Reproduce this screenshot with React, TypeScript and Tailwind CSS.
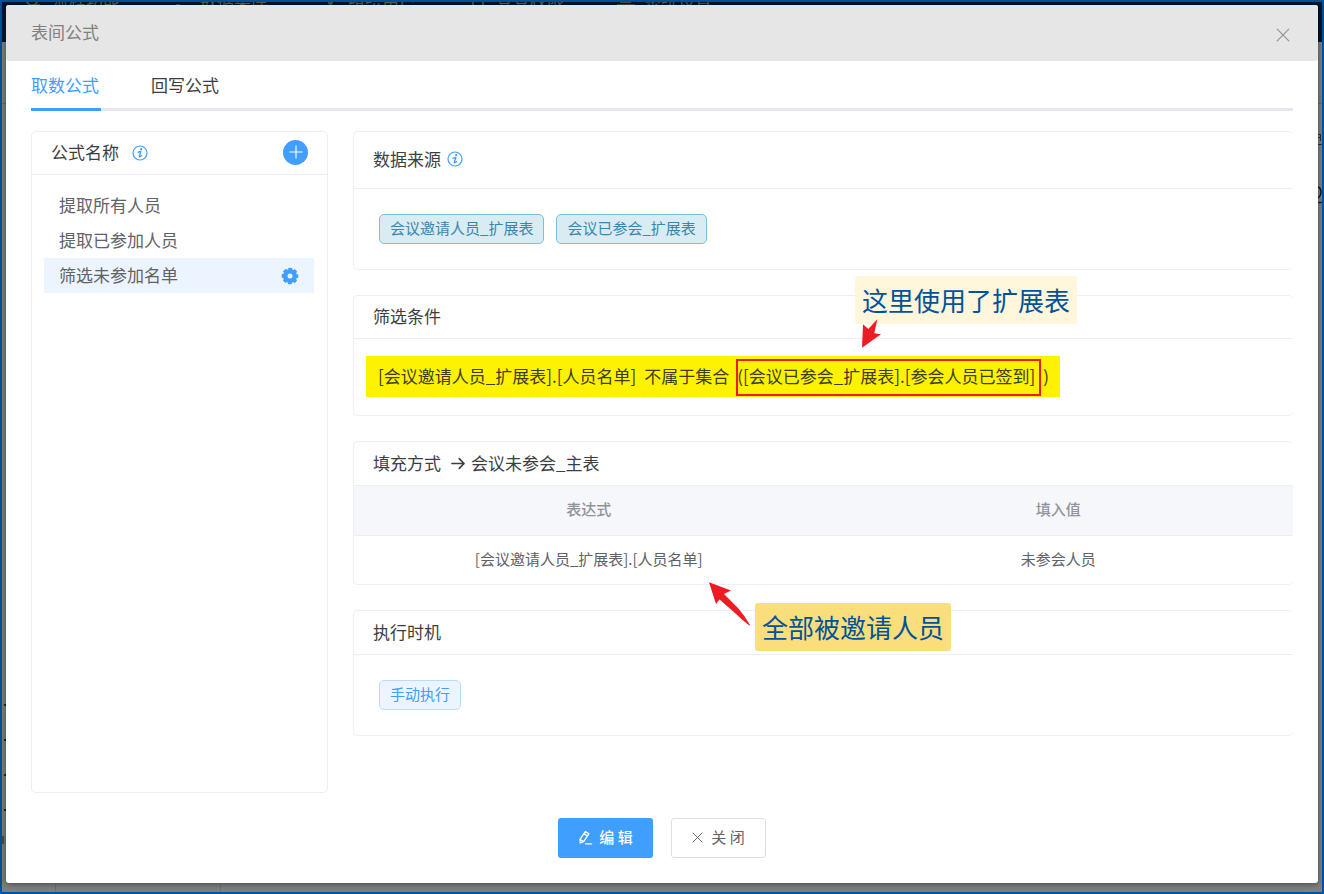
import { useState } from "react";
import type { ReactNode } from "react";

const FORMULAS = ["提取所有人员", "提取已参加人员", "筛选未参加名单"];
const TABS = ["取数公式", "回写公式"];
const SOURCES = ["会议邀请人员_扩展表", "会议已参会_扩展表"];
const NAV = [
  { label: "流程功能", icon: "M2 8A6 6 0 1 0 14 8M5 14H16" },
  { label: "数据集库", icon: "M4 9Q9 4 13 10M4 14H8" },
  { label: "组织用户", icon: "M8 12H13M9 14H12" },
  { label: "登登权限", icon: "M5 4V16M15 4V16" },
  { label: "系统设置", icon: "M4 11H15M1 14H19" },
];

function InfoIcon() {
  return (
    <svg viewBox="0 0 16 16" className="size-4 shrink-0 text-[#409eff]" fill="none" stroke="currentColor" aria-hidden="true">
      <circle cx="8" cy="8" r="7" strokeWidth="1.2" />
      <circle cx="9.2" cy="4.2" r="1.1" fill="currentColor" stroke="none" />
      <path d="M6.2 7.2 8.8 6.4 7.3 11.4Q7.1 12.6 9.4 10.8" strokeWidth="1.4" strokeLinecap="round" strokeLinejoin="round" />
    </svg>
  );
}

function CrossIcon({ className }: { className: string }) {
  return (
    <svg viewBox="0 0 14 14" className={className} fill="none" stroke="currentColor" strokeWidth="1.2" strokeLinecap="round" aria-hidden="true">
      <path d="M1.2 1.2 12.8 12.8M12.8 1.2 1.2 12.8" />
    </svg>
  );
}

function GearIcon() {
  return (
    <svg viewBox="0 0 18 18" className="size-[18px]" fill="none" stroke="#409eff" aria-hidden="true">
      <circle cx="9" cy="9" r="4.8" strokeWidth="4.6" />
      <circle cx="9" cy="9" r="7.1" strokeWidth="2.4" strokeDasharray="3.6 1.976" strokeDashoffset="1.8" />
    </svg>
  );
}

function PencilIcon() {
  return (
    <svg viewBox="0 0 15 15" className="size-[15px]" fill="none" stroke="currentColor" strokeWidth="1.3" strokeLinejoin="round" strokeLinecap="round" aria-hidden="true">
      <path d="M7.3 1.6 10.9 3.7 5.7 11.6 2.2 13 2 9.4ZM6 3.8 9.5 6M2.2 9.5 5.6 11.5M7.5 13.8H13.6" />
    </svg>
  );
}

function Card({ title, head, children }: { title: ReactNode; head: string; children: ReactNode }) {
  return (
    <section className="relative rounded-[5px] border border-r-0 border-[#ebeef5]">
      <h2 className={`flex items-center border-b border-[#ebeef5] px-[19px] pb-0.5 text-[17px] text-[#3c3e42] ${head}`}>{title}</h2>
      {children}
    </section>
  );
}

function Backdrop() {
  return (
    <div className="absolute inset-0 overflow-hidden bg-[#7f7f7f]" aria-hidden="true">
      <div className="flex h-10 items-start gap-[50px] bg-[#03152b] pl-[22px] text-[17px] leading-[17px] text-[#5f5f58]">
        {NAV.map((n) => (
          <span key={n.label} className="-mt-[11px] flex w-[98px] items-center gap-2 whitespace-nowrap">
            <svg viewBox="0 0 20 17" className="h-[17px] w-5 shrink-0" fill="none" stroke="currentColor" strokeWidth="1.5">
              <path d={n.icon} />
            </svg>
            {n.label}
          </span>
        ))}
      </div>
      <div className="h-[62px] border-b border-[#6a6a6a]" />
      <svg viewBox="0 0 4 80" className="absolute right-0 top-[125px] h-20 w-1" fill="none" stroke="#33331f">
        <path d="M0 7.5H3M0 10.5H3M2.5 7V14M0 17.5H4" />
        <path d="M0 60Q3 61 3 65T0 71" stroke="#101820" strokeWidth="1.4" />
        <path d="M0 75.5H4" stroke="#001f3f" strokeWidth="1.4" />
      </svg>
      <div className="absolute bottom-0 left-[53px] h-2 w-px bg-[#6f6f6f]" />
      <div className="absolute bottom-0 left-[218px] h-2 w-px bg-[#6f6f6f]" />
      <div className="absolute bottom-[81px] left-[2px] flex flex-col gap-[33px]">
        {[0, 1, 2, 3].map((i) => (
          <i key={i} className="size-0.5 bg-[#222200]" />
        ))}
      </div>
      <div className="absolute bottom-[48px] left-0 h-2 w-0.5 bg-[#4a4a4a]" />
    </div>
  );
}

export default function App() {
  const [tab, setTab] = useState(0);
  const [selected, setSelected] = useState(2);

  return (
    <div className="relative flex min-h-screen flex-col border-2 border-[#00529b] font-['Noto_Sans_CJK_SC','Noto_Sans',sans-serif]">
      <Backdrop />
      <main role="dialog" aria-label="表间公式" className="relative mx-1 mb-[9px] mt-[3px] flex flex-1 flex-col rounded-[3px] bg-white shadow-[0_1px_6px_rgba(0,0,0,0.45)]">
        <header className="flex h-14 items-center justify-between rounded-[3px] bg-[#e6e6e6] pl-[25px] pr-7">
          <h1 className="pb-0.5 text-[17px] text-[#808080]">表间公式</h1>
          <button type="button" aria-label="关闭窗口" className="mt-1 text-[#909399]">
            <CrossIcon className="size-3.5" />
          </button>
        </header>

        <div className="flex flex-1 flex-col px-[25px] pb-[25px]">
          <div role="tablist" className="flex h-[50px] gap-[50px] border-b-3 border-[#e4e7ed]">
            {TABS.map((t, i) => (
              <button
                key={t}
                type="button"
                role="tab"
                aria-selected={tab === i}
                onClick={() => setTab(i)}
                className={`-mb-[3px] w-[70px] whitespace-nowrap border-b-3 text-left text-[17px] ${
                  tab === i ? "border-[#409eff] text-[#409eff]" : "border-transparent text-[#3c3e42]"
                }`}
              >
                {t}
              </button>
            ))}
          </div>

          <div className="mt-5 flex flex-1 gap-[25px]">
            <aside className="flex w-[297px] shrink-0 flex-col rounded-[5px] border border-[#ebeef5]">
              <div className="flex h-[43px] items-center border-b border-[#ebeef5] px-[19px] pb-0.5">
                <h2 className="mr-[13px] text-[17px] text-[#3c3e42]">公式名称</h2>
                <span className="pt-0.5">
                  <InfoIcon />
                </span>
                <button type="button" aria-label="新增公式" className="ml-auto flex size-[25px] items-center justify-center rounded-full bg-[#409eff]">
                  <svg viewBox="0 0 14 14" className="size-3.5" stroke="#fff" strokeWidth="1.1" aria-hidden="true">
                    <path d="M7 .5V13.5M.5 7H13.5" />
                  </svg>
                </button>
              </div>
              <ul className="pl-3 pr-[13px] pt-[13px]">
                {FORMULAS.map((f, i) => (
                  <li key={f} className={`flex h-[35px] items-center px-[15px] ${selected === i ? "bg-[#ecf5ff]" : ""}`}>
                    <button type="button" onClick={() => setSelected(i)} className="flex-1 pb-0.5 text-left text-[17px] text-[#606266]">
                      {f}
                    </button>
                    {selected === i && (
                      <button type="button" aria-label="设置">
                        <GearIcon />
                      </button>
                    )}
                  </li>
                ))}
              </ul>
            </aside>

            <div className="flex min-w-0 flex-1 flex-col gap-[25px]">
              <Card head="h-[57px] gap-1.5" title={<>数据来源<InfoIcon /></>}>
                <div className="flex gap-3 p-[25px]">
                  {SOURCES.map((s) => (
                    <span key={s} className="flex h-[30px] items-center rounded-[5px] border border-[#7cc0d8] bg-[#d9ebf3] px-2.5 pb-0.5 text-[15px] text-[#3a87ad]">
                      {s}
                    </span>
                  ))}
                </div>
              </Card>

              <Card head="h-[43px]" title="筛选条件">
                <div className="pb-[18px] pl-3 pt-[17px]">
                  <p className="flex h-[41px] w-[694px] items-center gap-2 whitespace-nowrap bg-[#fff200] pb-0.5 pl-3 text-[17px] text-[#3c3d18]">
                    <span>[会议邀请人员_扩展表].[人员名单]</span>
                    <span>不属于集合</span>
                    <span className="relative">
                      ([会议已参会_扩展表].[参会人员已签到]
                      <span className="absolute -bottom-2 -left-px -right-1.5 -top-1 border-2 border-[#ed1c24]" />
                    </span>
                    <span>)</span>
                  </p>
                </div>
                <div className="absolute -top-5 left-[501px] flex h-12 items-center rounded-[3px] bg-[#fff5d9]/95 px-[7px] pb-0.5 text-[26px] whitespace-nowrap text-[#00529b]">
                  这里使用了扩展表
                </div>
                <svg viewBox="0 0 20 30" className="absolute left-[507px] top-[22px] h-[30px] w-5" fill="#ed1c24" aria-hidden="true">
                  <path d="M1 29.7 2 6.3 7.3 11 16.3 1.3 13.3 15.3 20 16.3Z" />
                </svg>
              </Card>

              <Card
                head="h-[44px]"
                title={
                  <>
                    填充方式
                    <svg viewBox="0 0 14 14" className="ml-[10px] mr-1.5 size-3.5" fill="none" stroke="currentColor" strokeWidth="1.7" strokeLinecap="round" strokeLinejoin="round" aria-hidden="true">
                      <path d="M1 7.5H13M8.3 2.7 13 7.5 8.3 12.3" />
                    </svg>
                    会议未参会_主表
                  </>
                }
              >
                <table className="w-full table-fixed border-separate border-spacing-0 text-center text-[15px]">
                  <thead>
                    <tr className="h-[50px] bg-[#f5f7fa] text-[#909399]">
                      <th className="border-b border-[#ebeef5] pb-0.5 pt-0 font-medium">表达式</th>
                      <th className="border-b border-[#ebeef5] pb-0.5 pt-0 font-medium">填入值</th>
                    </tr>
                  </thead>
                  <tbody>
                    <tr className="h-12 text-[#606266]">
                      <td className="pb-0.5 pt-0">[会议邀请人员_扩展表].[人员名单]</td>
                      <td className="pb-0.5 pt-0">未参会人员</td>
                    </tr>
                  </tbody>
                </table>
              </Card>

              <Card head="h-[44px]" title="执行时机">
                <div className="flex p-[25px]">
                  <span className="flex h-[30px] items-center rounded-[5px] border border-[#b9ddf8] bg-[#ecf5ff] px-2.5 pb-0.5 text-[15px] text-[#409eff]">
                    手动执行
                  </span>
                </div>
                <svg viewBox="0 0 44 46" className="absolute -top-[29px] left-[354px] h-[46px] w-11" fill="#ed1c24" aria-hidden="true">
                  <path d="M1 .3 23 8.5 16 12 30 26Q37 34 42.3 43.5L41 43.3Q34 38 27 31L11.5 17.5 8 22Z" />
                </svg>
                <div className="absolute -top-2 left-[401px] flex h-12 items-center rounded-[3px] bg-[#fadc75]/95 px-[7px] pb-0.5 text-[26px] whitespace-nowrap text-[#00529b]">
                  全部被邀请人员
                </div>
              </Card>
            </div>
          </div>

          <footer className="mt-[25px] flex justify-center gap-[18px]">
            <button type="button" className="flex h-10 w-[95px] items-center justify-center gap-1.5 rounded-[3px] bg-[#409eff] pb-0.5 text-[15px] font-medium text-white">
              <PencilIcon />
              <span>编 辑</span>
            </button>
            <button type="button" className="flex h-10 w-[95px] items-center justify-center gap-2 rounded-[3px] border border-[#dcdfe6] bg-white pb-0.5 text-[15px] text-[#606266]">
              <CrossIcon className="size-[11px]" />
              <span>关 闭</span>
            </button>
          </footer>
        </div>
      </main>
    </div>
  );
}
